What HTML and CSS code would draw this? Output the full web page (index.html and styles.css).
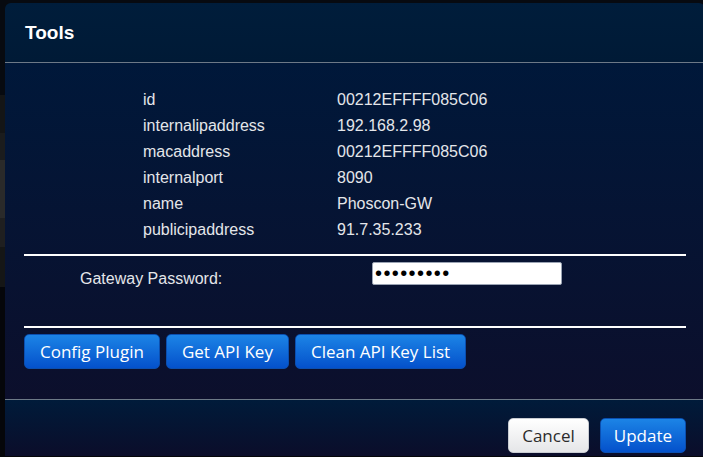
FILE: index.html
```html
<!DOCTYPE html>
<html>
<head>
<meta charset="utf-8">
<link rel="stylesheet" href="styles.css">
</head>
<body>
<div class="backdrop"></div>
<div class="modal">
  <div class="modal-header">
    <h1 class="title">Tools</h1>
  </div>
  <div class="modal-body">
    <div class="info">
      <div class="row"><span class="key">id</span><span class="val">00212EFFFF085C06</span></div>
      <div class="row"><span class="key">internalipaddress</span><span class="val">192.168.2.98</span></div>
      <div class="row"><span class="key">macaddress</span><span class="val">00212EFFFF085C06</span></div>
      <div class="row"><span class="key">internalport</span><span class="val">8090</span></div>
      <div class="row"><span class="key">name</span><span class="val">Phoscon-GW</span></div>
      <div class="row"><span class="key">publicipaddress</span><span class="val">91.7.35.233</span></div>
    </div>
    <hr class="rule">
    <div class="pw-row">
      <label class="pw-label" for="pw">Gateway Password:</label>
      <input class="pw-input" id="pw" type="password" value="abcdefghi">
    </div>
    <hr class="rule rule-2">
    <div class="actions">
      <button class="btn btn-blue">Config Plugin</button>
      <button class="btn btn-blue">Get API Key</button>
      <button class="btn btn-blue">Clean API Key List</button>
    </div>
  </div>
  <div class="modal-footer">
    <button class="btn btn-small btn-white">Cancel</button>
    <button class="btn btn-small btn-blue">Update</button>
  </div>
</div>
</body>
</html>
```
FILE: styles.css
```css
html, body {
  margin: 0;
  padding: 0;
  width: 703px;
  height: 457px;
  overflow: hidden;
}
body {
  background: #05070c;
  font-family: "Liberation Sans", Arial, sans-serif;
  position: relative;
}
.backdrop {
  height: 457px;
  background: linear-gradient(to bottom,
    #070a10 0, #070a10 95px,
    #141516 95px, #141516 133px,
    #1b1c1d 133px, #1b1c1d 160px,
    #2a2a2a 160px, #2a2a2a 218px,
    #1f1f20 218px, #1f1f20 247px,
    #151616 247px, #151616 287px,
    #05060a 287px, #05060a 457px);
}
.modal {
  position: absolute;
  left: 5px;
  top: 3px;
  width: 700px;
  border-radius: 6px 6px 0 0;
  overflow: hidden;
}
.modal-header {
  height: 60px;
  box-sizing: border-box;
  padding: 20px 20px 0;
  background: linear-gradient(to bottom, #001d3b, #001a36);
  border-bottom: 1px solid #6d7987;
}
.title {
  margin: 0;
  font-size: 19px;
  line-height: 20px;
  font-weight: bold;
  color: #ffffff;
}
.modal-body {
  padding: 24px 19px 30px;
  background: linear-gradient(to bottom, #00183a, #0c0f2c);
}
.info {
  padding-left: 119px;
}
.row {
  display: flex;
  height: 26px;
  line-height: 26px;
  font-size: 16px;
  color: #e4e6ea;
}
.key {
  width: 194px;
}
.rule {
  border: 0;
  height: 2px;
  background: #ffffff;
  margin: 11px 0 0;
}
.rule-2 {
  margin-top: 38px;
}
.pw-row {
  display: flex;
  align-items: flex-start;
  margin-top: 6px;
  height: 26px;
}
.pw-label {
  width: 348px;
  padding-left: 56px;
  padding-top: 8px;
  box-sizing: border-box;
  font-size: 16px;
  line-height: 18px;
  color: #e4e6ea;
}
.pw-input {
  width: 190px;
  height: 23px;
  box-sizing: border-box;
  margin: 0;
  padding: 0 2px;
  border: 1px solid #9aa3b3;
  border-radius: 2px;
  background: #ffffff;
  color: #000000;
  font-family: "Liberation Sans", Arial, sans-serif;
  font-size: 20px;
  letter-spacing: 1.4px;
  outline: none;
}
.actions {
  display: flex;
  gap: 6px;
  margin-top: 6px;
}
.btn {
  height: 35px;
  padding: 0 15px;
  border-radius: 5px;
  font-family: "Open Sans", "Noto Sans", sans-serif;
  font-size: 17px;
  line-height: 33px;
  cursor: pointer;
}
.btn-blue {
  color: #ffffff;
  border: 1px solid #0b4fb0;
  background: linear-gradient(to bottom, #1c84e6, #0451cb);
}
.btn-white {
  color: #2b2b2b;
  border: 1px solid #c9ccd2;
  background: linear-gradient(to bottom, #ffffff, #e5e6e8);
}
.btn-small {
  padding: 0 13px;
}
.modal-footer {
  height: 57px;
  box-sizing: border-box;
  padding: 18px 19px 0;
  display: flex;
  justify-content: flex-end;
  gap: 11px;
  border-top: 1px solid #6d7987;
  background: linear-gradient(to bottom, #001b3a, #0b0d2a);
}
```
